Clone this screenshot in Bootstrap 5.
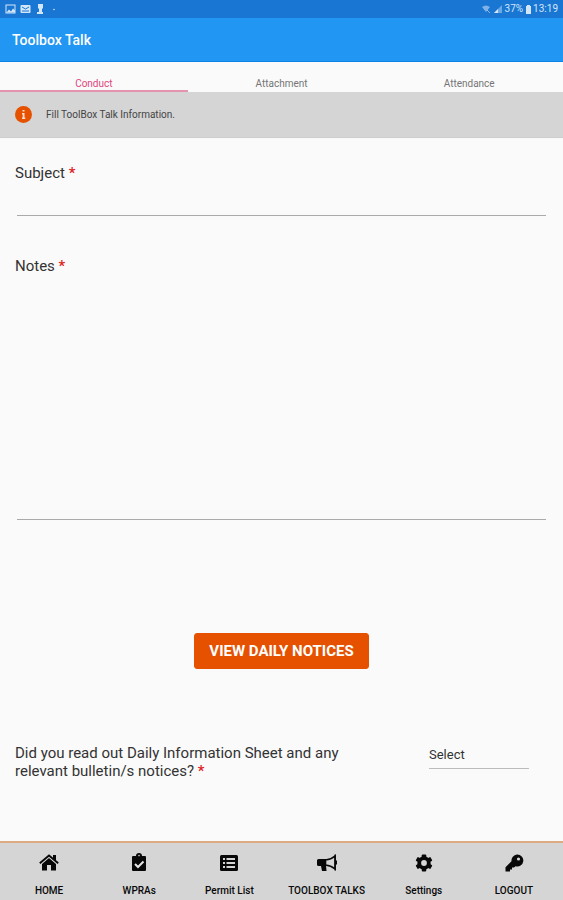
<!DOCTYPE html>
<html lang="en">
<head>
<meta charset="utf-8">
<meta name="viewport" content="width=device-width, initial-scale=1">
<title>Toolbox Talk</title>
<link href="https://cdn.jsdelivr.net/npm/bootstrap@5.3.0/dist/css/bootstrap.min.css" rel="stylesheet">
<style>
body { font-family: Roboto, "Liberation Sans", sans-serif; font-size: 15px; line-height: 18px; background: #fafafa; color: #333; }
.status-bar { height: 18px; background: #1976d2; color: #d3e6f8; font-size: 10px; padding: 0 5px; }
.title-bar { height: 44px; background: #2196f3; border-bottom: 1px solid #0b83e6; padding: 0 12px; }
.title-bar h1 { font-size: 14px; line-height: 18px; font-weight: 500; color: #fff; }
.tab-strip { height: 30px; }
.tab-strip a { font-size: 10px; line-height: 12px; color: #757575; border-bottom: 2px solid transparent; }
.tab-strip a.active { color: #e0447c; border-color: #e594b0; }
.info-strip { height: 46px; background: #d5d5d5; border-bottom: 1px solid #cdcdcd; font-size: 10px; padding: 0 15px; gap: 14px; color: #444; }
.form-area { padding: 26px 15px 0; }
.required { color: #e02020; font-weight: 500; }
.line-field { display: block; width: calc(100% - 4px); margin: 0 2px; border: 0; border-bottom: 1px solid #aaa; background: transparent; resize: none; outline: 0; }
.subject-field { height: 34px; }
.notes-field { height: 245px; }
.notes-group { margin-top: 41px; }
.notices-btn { --bs-btn-bg: #e65100; --bs-btn-border-color: #e65100; --bs-btn-color: #fff; --bs-btn-hover-bg: #d04a00; --bs-btn-hover-color: #fff; --bs-btn-font-size: 15px; --bs-btn-padding-x: 14px; --bs-btn-padding-y: 7px; --bs-btn-line-height: 20px; --bs-btn-border-radius: 3px; --bs-btn-font-weight: 700; margin-top: 113px; }
.question { margin-top: 75px; padding-right: 19px; }
.question label { max-width: 345px; }
.answer { width: 100px; height: 25px; flex-shrink: 0; appearance: none; border: 0; border-bottom: 1px solid #bbb; border-radius: 0; background: transparent; font-size: 13px; padding: 0 0 2px; color: #333; outline: 0; }
.bottom-nav { display: grid; grid-template-columns: 90fr 90fr 90fr 104fr 90fr 90fr; height: 59px; padding: 10px 4px 0; background: #d5d5d5; border-top: 2px solid #dcab82; }
.bottom-nav a { color: #080808; font-size: 10px; line-height: 12px; font-weight: 500; gap: 12px; }
.bottom-nav svg { height: 20px; }
</style>
</head>
<body class="d-flex flex-column min-vh-100">
<header>
  <div class="status-bar d-flex align-items-center justify-content-between">
    <div class="d-flex align-items-center gap-1">
      <svg width="11" height="11" viewBox="0 0 11 11" fill="none" stroke="currentColor" aria-hidden="true"><rect x="1" y="1" width="9" height="8"/><path d="M1.500 8.500 4 5.500l2 2 2-3 2 2v2Z" fill="currentColor" stroke="none"/></svg>
      <svg width="11" height="11" viewBox="0 0 11 11" aria-hidden="true"><rect x=".5" y="1" width="10" height="8" rx="1" fill="currentColor"/><path d="M2 3l3.500 2L9 3M2 7h7" fill="none" stroke="#1976d2"/></svg>
      <svg width="11" height="12" viewBox="0 0 11 12" fill="currentColor" aria-hidden="true"><path d="M3 1h5v4L7 6v3h1v2H2V9h2V6L3 5Z"/></svg>
      <svg width="11" height="11" viewBox="0 0 11 11" fill="currentColor" aria-hidden="true"><circle cx="4" cy="5.500" r=".8"/></svg>
    </div>
    <div class="d-flex align-items-center">
      <svg width="24" height="11" viewBox="0 0 24 11" aria-hidden="true"><path d="M1 3q4-3 8 0L5 8Z" fill="currentColor" opacity=".55"/><path d="m6 6 3 3" stroke="currentColor" opacity=".6"/><path d="M13 9h8V1Z" fill="currentColor" opacity=".45"/><path d="M13 9h4V5Z" fill="currentColor"/></svg>
      <span>37%</span>
      <svg width="10" height="11" viewBox="0 0 10 11" aria-hidden="true"><path d="M4 1h3v1h1v8H3V2h1Z" fill="currentColor"/></svg>
      <span>13:19</span>
    </div>
  </div>
  <div class="title-bar d-flex align-items-center"><h1 class="m-0">Toolbox Talk</h1></div>
</header>
<nav class="tab-strip nav nav-fill flex-nowrap" aria-label="Sections">
  <a href="#conduct" class="active w-100 d-flex align-items-end justify-content-center text-decoration-none" aria-current="page">Conduct</a>
  <a href="#attachment" class="w-100 d-flex align-items-end justify-content-center text-decoration-none">Attachment</a>
  <a href="#attendance" class="w-100 d-flex align-items-end justify-content-center text-decoration-none">Attendance</a>
</nav>
<div class="info-strip d-flex align-items-center">
  <svg width="17" height="17" viewBox="0 0 17 17" aria-hidden="true"><circle cx="8.500" cy="8.500" r="8.500" fill="#e65100"/><path d="M7.500 4h2v1.500h-2zM7 7h2.500v4.500h.8V13H7v-1.500h.7v-3H7Z" fill="#fbdcc8"/></svg>
  <span>Fill ToolBox Talk Information.</span>
</div>
<main class="form-area flex-grow-1" id="conduct">
  <form>
    <div>
      <label class="d-block" for="subject">Subject <span class="required">*</span></label>
      <input class="line-field subject-field" type="text" id="subject">
    </div>
    <div class="notes-group">
      <label class="d-block" for="notes">Notes <span class="required">*</span></label>
      <textarea class="line-field notes-field" id="notes"></textarea>
    </div>
    <div class="text-center"><button class="btn notices-btn" type="button">VIEW DAILY NOTICES</button></div>
    <div class="question d-flex justify-content-between align-items-start">
      <label for="answer"><span>Did you read out Daily Information Sheet and any</span> <span>relevant bulletin/s notices?</span> <span class="required">*</span></label>
      <select class="answer" id="answer"><option>Select</option></select>
    </div>
  </form>
</main>
<nav class="bottom-nav" aria-label="Main">
  <a href="#home" class="d-flex flex-column align-items-center text-decoration-none text-nowrap">
    <svg width="20" viewBox="0 0 20 20" aria-hidden="true"><path d="M3 11 10 5l7 6v6.500h-5V12H8v5.500H3Z" fill="currentColor"/><path d="M.8 9.800 10 2l9.200 7.800" fill="none" stroke="#d5d5d5" stroke-width="4"/><path d="M14 2h3v6l-3-2.500Z" fill="currentColor"/><path d="M.8 10.300 10 2.500l9.200 7.800" fill="none" stroke="currentColor" stroke-width="1.800"/></svg>
    <span>HOME</span></a>
  <a href="#wpras" class="d-flex flex-column align-items-center text-decoration-none text-nowrap">
    <svg width="20" viewBox="0 0 20 20" aria-hidden="true"><path d="M4 3h3a3 3 0 0 1 6 0h3q1 0 1 1v13q0 1-1 1H4q-1 0-1-1V4q0-1 1-1Z" fill="currentColor"/><circle cx="10" cy="2.600" r=".8" fill="#d5d5d5"/><path d="m6 11 3 3 5.500-5.500" fill="none" stroke="#e6e6e6" stroke-width="2"/></svg>
    <span>WPRAs</span></a>
  <a href="#permits" class="d-flex flex-column align-items-center text-decoration-none text-nowrap">
    <svg width="20" viewBox="0 0 20 20" aria-hidden="true"><rect x="1" y="2" width="18" height="16" rx="1.500" fill="currentColor"/><path d="M4 6h2m1.500 0H16M4 10h2m1.500 0H16M4 14h2m1.500 0H16" stroke="#d5d5d5" stroke-width="2"/></svg>
    <span>Permit List</span></a>
  <a href="#talks" class="d-flex flex-column align-items-center text-decoration-none text-nowrap">
    <svg width="20" viewBox="0 0 20 20" aria-hidden="true"><path d="M1.500 6H9v6.500l.5 5.500H5l-1-5H1.500Q0 13 0 11.500v-4Q0 6 1.500 6Z" fill="currentColor"/><path d="M8.500 7Q14 6.500 18 3v13Q14 12.500 8.500 12Z" fill="none" stroke="currentColor" stroke-width="1.600"/><path d="M18.200 1.500v16M19.400 7.500v4" stroke="currentColor" stroke-width="1.400"/></svg>
    <span>TOOLBOX TALKS</span></a>
  <a href="#settings" class="d-flex flex-column align-items-center text-decoration-none text-nowrap">
    <svg width="20" viewBox="0 0 20 20" aria-hidden="true"><g fill="currentColor"><circle cx="10" cy="10" r="6.700"/><rect x="7.800" y="1.500" width="4.400" height="17" rx=".8"/><rect x="7.800" y="1.500" width="4.400" height="17" rx=".8" transform="rotate(60 10 10)"/><rect x="7.800" y="1.500" width="4.400" height="17" rx=".8" transform="rotate(120 10 10)"/></g><circle cx="10" cy="10" r="2.900" fill="#d5d5d5"/></svg>
    <span>Settings</span></a>
  <a href="#logout" class="d-flex flex-column align-items-center text-decoration-none text-nowrap">
    <svg width="20" viewBox="0 0 20 20" aria-hidden="true"><path d="M13 1.500a6 6 0 1 1-1.500 11.700L10 14.500H8v2H6v2H1.500v-4.300l6-6A6 6 0 0 1 13 1.500Z" fill="currentColor"/><circle cx="14.500" cy="6" r="1.600" fill="#d5d5d5"/></svg>
    <span>LOGOUT</span></a>
</nav>
<script src="https://cdn.jsdelivr.net/npm/bootstrap@5.3.0/dist/js/bootstrap.bundle.min.js"></script>
</body>
</html>
